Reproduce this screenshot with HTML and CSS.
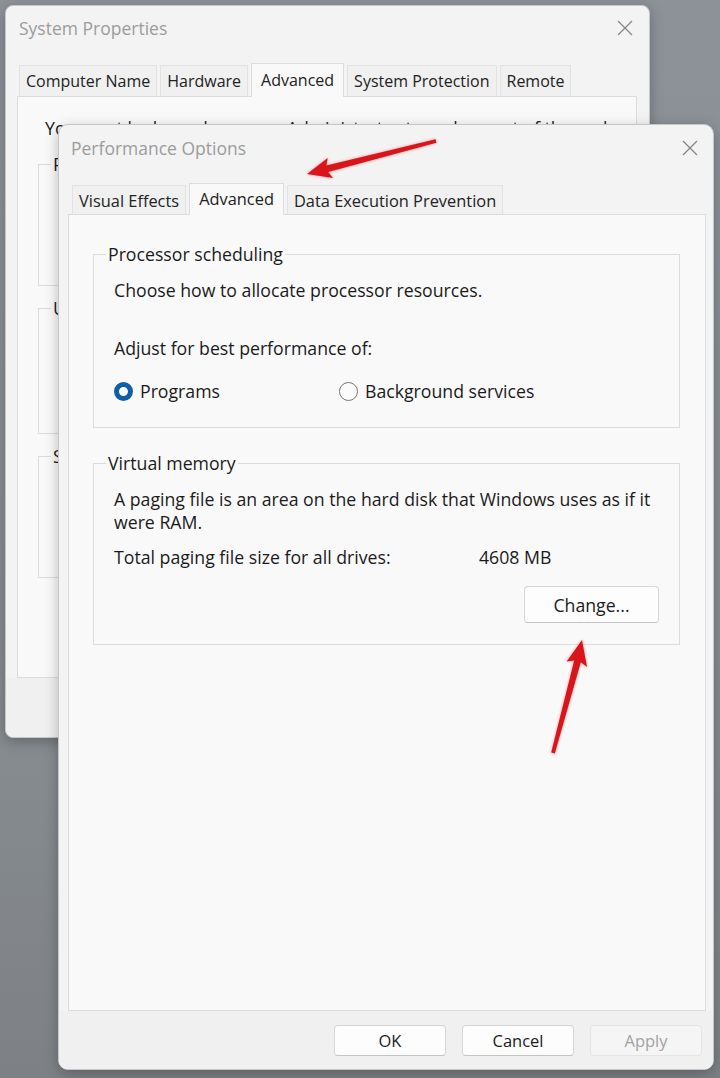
FILE: index.html
```html
<!DOCTYPE html>
<html lang="en">
<head>
    <meta charset="UTF-8">
    <meta name="viewport" content="width=device-width, initial-scale=1.0">
    <title>Performance Options</title>
    <link rel="stylesheet" href="styles.css">
</head>
<body>
    <div class="desktop">

        <!-- background dialog -->
        <div class="window sysprops">
            <div class="titlebar">
                <span class="title">System Properties</span>
                <svg class="close" width="16" height="16" viewBox="0 0 16 16"><path d="M1 1L15 15M15 1L1 15"/></svg>
            </div>
            <div class="tabs">
                <div class="tab">Computer Name</div>
                <div class="tab">Hardware</div>
                <div class="tab active">Advanced</div>
                <div class="tab">System Protection</div>
                <div class="tab">Remote</div>
            </div>
            <div class="panel">
                <p class="note">You must be logged on as an Administrator to make most of these changes.</p>
                <fieldset class="group sys-group">
                    <legend>Performance</legend>
                    <p>Visual effects, processor scheduling, memory usage and virtual memory</p>
                </fieldset>
                <fieldset class="group sys-group">
                    <legend>User Profiles</legend>
                    <p>Desktop settings related to your sign-in</p>
                </fieldset>
                <fieldset class="group sys-group">
                    <legend>Startup and Recovery</legend>
                    <p>System startup, system failure, and debugging information</p>
                </fieldset>
            </div>
            <div class="footer">
                <button class="btn">OK</button>
                <button class="btn">Cancel</button>
                <button class="btn" disabled>Apply</button>
            </div>
        </div>

        <!-- front dialog -->
        <div class="window perf">
            <div class="titlebar">
                <span class="title">Performance Options</span>
                <svg class="close" width="16" height="16" viewBox="0 0 16 16"><path d="M1 1L15 15M15 1L1 15"/></svg>
            </div>
            <div class="tabs">
                <div class="tab">Visual Effects</div>
                <div class="tab active">Advanced</div>
                <div class="tab">Data Execution Prevention</div>
            </div>
            <div class="panel">
                <fieldset class="group sched">
                    <legend>Processor scheduling</legend>
                    <p>Choose how to allocate processor resources.</p>
                    <p class="adjust">Adjust for best performance of:</p>
                    <div class="radios">
                        <label class="radio"><span class="dot checked"></span>Programs</label>
                        <label class="radio"><span class="dot"></span>Background services</label>
                    </div>
                </fieldset>
                <fieldset class="group vmem">
                    <legend>Virtual memory</legend>
                    <p class="wrap">A paging file is an area on the hard disk that Windows uses as if it<br>were RAM.</p>
                    <div class="size-row">
                        <span class="size-label">Total paging file size for all drives:</span>
                        <span>4608 MB</span>
                    </div>
                    <div class="change-row">
                        <button class="btn change">Change...</button>
                    </div>
                </fieldset>
            </div>
            <div class="footer">
                <button class="btn">OK</button>
                <button class="btn">Cancel</button>
                <button class="btn" disabled>Apply</button>
            </div>
        </div>

        <!-- red annotation arrows drawn on top of the screenshot -->
        <svg class="arrows" width="720" height="1078" viewBox="0 0 720 1078">
            <defs>
                <filter id="soft"><feGaussianBlur stdDeviation="1.8"/></filter>
            </defs>
            <g filter="url(#soft)" fill="#e8262b" opacity="0.5">
                <polygon points="307,174 327.7,158 326.4,165.6 435.6,139.2 436.4,142.8 328.2,172 333,178"/>
                <polygon points="582,640 587,667 580.8,662.2 554.8,753.6 551.2,752.4 574.2,660.4 566.6,661.5"/>
            </g>
            <g fill="#d9151c">
                <polygon points="307,174 327.7,158 326.4,165.6 435.6,139.2 436.4,142.8 328.2,172 333,178"/>
                <polygon points="582,640 587,667 580.8,662.2 554.8,753.6 551.2,752.4 574.2,660.4 566.6,661.5"/>
            </g>
        </svg>
    </div>
</body>
</html>
```

FILE: styles.css
```css
* {
    margin: 0;
    padding: 0;
    box-sizing: border-box;
    font-family: 'Open Sans', 'Noto Sans', sans-serif;
}

body {
    background: #878c91;
    color: #1b1b1b;
    font-size: 17.7px;
}

.desktop {
    position: relative;
    width: 720px;
    height: 1078px;
    overflow: hidden;
    background: linear-gradient(to bottom, #8d9298, #868b90 70%, #7d8185);
}

.window {
    position: absolute;
    display: flex;
    flex-direction: column;
    background: #f3f3f3;
    border: 1px solid #c4c6c8;
    border-radius: 8px;
    box-shadow: 0 4px 14px rgba(0, 0, 0, 0.25);
}

.sysprops {
    left: 5px;
    top: 5px;
    width: 645px;
    height: 733px;
}

.perf {
    left: 58px;
    top: 124px;
    width: 656px;
    height: 946px;
    border-radius: 10px;
}

.titlebar {
    display: flex;
    align-items: center;
    justify-content: space-between;
    height: 46px;
    padding: 0 16px 3px 13px;
}

.perf .titlebar {
    height: 48px;
    padding: 0 15px 3px 12px;
}

.title {
    color: #9c9c9c;
    font-size: 17.5px;
}

.close path {
    stroke: #858585;
    stroke-width: 1.3;
    fill: none;
}

.tabs {
    display: flex;
    align-items: flex-end;
    gap: 3px;
    height: 44px;
    padding-left: 13px;
    font-size: 16px;
}

.perf .tabs {
    height: 41px;
    font-size: 16.4px;
}

.tab {
    height: 31px;
    line-height: 31px;
    padding: 0 6px;
    background: #f0f0f0;
    border: 1px solid #e2e2e2;
    border-bottom: none;
    color: #222;
    white-space: nowrap;
}

.perf .tab {
    height: 29px;
    line-height: 30px;
}

.tab.active {
    position: relative;
    z-index: 1;
    height: 34px;
    line-height: 32px;
    margin-bottom: -1px;
    background: #f9f9f9;
    border-color: #dcdcdc;
    padding: 0 9px;
}

.perf .tab.active {
    height: 32px;
    line-height: 29px;
}

.panel {
    background: #f9f9f9;
    border: 1px solid #dcdcdc;
}

.sysprops .panel {
    height: 582px;
    margin: 0 12px 0 11px;
    padding: 20px 20px 0;
}

.perf .panel {
    flex: 1;
    margin: 0 7px 0 9px;
    padding: 28px 25px 0 24px;
}

.note {
    line-height: 22px;
    padding-left: 7px;
    white-space: nowrap;
    margin-bottom: 14px;
}

.group {
    border: 1px solid #dcdcdc;
    padding: 0 20px;
    line-height: 22px;
}

.group legend {
    padding: 0 2px;
    margin-left: -8px;
    line-height: 22px;
}

.group p {
    white-space: nowrap;
}

.sys-group {
    height: 133px;
    padding-top: 6px;
    margin-bottom: 11px;
}

.sys-group:nth-of-type(2) {
    height: 137px;
}

.sched {
    padding-top: 14px;
    padding-bottom: 25px;
}

.adjust {
    margin-top: 36px;
}

.radios {
    display: flex;
    margin-top: 21px;
}

.radio {
    display: flex;
    align-items: center;
    gap: 7px;
}

.radio:first-child {
    width: 225px;
}

.dot {
    width: 19px;
    height: 19px;
    border-radius: 50%;
    border: 1px solid #767676;
    background: #fbfbfb;
}

.dot.checked {
    border: 5px solid #0f5ea8;
    background: #fff;
}

.vmem {
    margin-top: 24px;
    padding-top: 14px;
    padding-bottom: 21px;
}

.wrap {
    line-height: 23px;
}

.size-row {
    display: flex;
    margin-top: 12px;
}

.size-label {
    width: 365px;
}

.change-row {
    display: flex;
    justify-content: flex-end;
    margin-top: 18px;
}

.btn {
    height: 31px;
    width: 112px;
    background: #fdfdfd;
    border: 1px solid #d6d6d6;
    border-bottom-color: #c3c3c3;
    border-radius: 4px;
    color: #1b1b1b;
    font-size: 16.5px;
}

.btn:disabled {
    background: #f5f5f5;
    border-color: #e4e4e4;
    color: #a2a2a2;
}

.change {
    width: 135px;
    height: 37px;
    font-size: 17.7px;
}

.footer {
    display: flex;
    justify-content: flex-end;
    gap: 16px;
    padding: 14px 11px 13px;
    background: #f0f0f0;
    border-radius: 0 0 8px 8px;
}

.sysprops .footer {
    padding-top: 15px;
}

.arrows {
    position: absolute;
    left: 0;
    top: 0;
    pointer-events: none;
}
```
